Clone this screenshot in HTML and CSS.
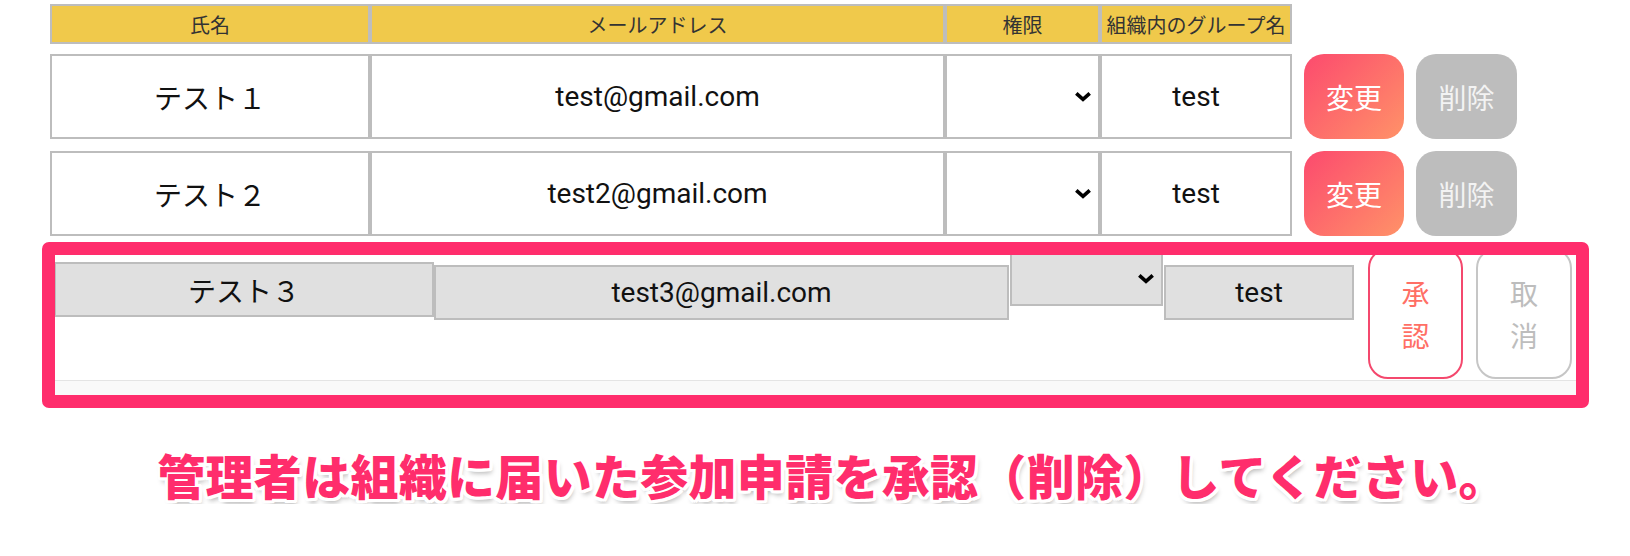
FILE: index.html
```html
<!DOCTYPE html>
<html lang="ja">
<head>
<meta charset="utf-8">
<title>メンバー管理</title>
<link rel="stylesheet" href="styles.css">
</head>
<body>
<div class="page">
  <div class="list">
    <div class="row head">
      <div class="cell c-name">氏名</div>
      <div class="cell c-mail">メールアドレス</div>
      <div class="cell c-role">権限</div>
      <div class="cell c-group">組織内のグループ名</div>
    </div>
    <div class="row member">
      <div class="cell c-name">テスト１</div>
      <div class="cell c-mail">test@gmail.com</div>
      <div class="cell c-role select"><svg class="chev" width="18" height="11" viewBox="0 0 18 11"><path d="M2.3 2.3 L9 8.4 L15.7 2.3" fill="none" stroke="#000" stroke-width="3.6"/></svg></div>
      <div class="cell c-group">test</div>
      <div class="actions">
        <button class="btn btn-change">変更</button>
        <button class="btn btn-delete">削除</button>
      </div>
    </div>
    <div class="row member">
      <div class="cell c-name">テスト２</div>
      <div class="cell c-mail">test2@gmail.com</div>
      <div class="cell c-role select"><svg class="chev" width="18" height="11" viewBox="0 0 18 11"><path d="M2.3 2.3 L9 8.4 L15.7 2.3" fill="none" stroke="#000" stroke-width="3.6"/></svg></div>
      <div class="cell c-group">test</div>
      <div class="actions">
        <button class="btn btn-change">変更</button>
        <button class="btn btn-delete">削除</button>
      </div>
    </div>
  </div>

  <div class="pending-frame">
    <div class="pending-row">
      <div class="p-cell p-name">テスト３</div>
      <div class="p-cell p-mail">test3@gmail.com</div>
      <div class="p-cell p-role"><svg class="chev" width="18" height="11" viewBox="0 0 18 11"><path d="M2.3 2.3 L9 8.4 L15.7 2.3" fill="none" stroke="#000" stroke-width="3.6"/></svg></div>
      <div class="p-cell p-group">test</div>
      <button class="p-btn p-approve">承認</button>
      <button class="p-btn p-cancel">取消</button>
    </div>
    <div class="strip"></div>
  </div>

  <p class="caption">管理者は組織に届いた参加申請を承認（削除）してください。</p>
</div>
</body>
</html>
```

FILE: styles.css
```css
html, body {
  margin: 0;
  padding: 0;
  background: #ffffff;
}

body {
  font-family: Roboto, "Noto Sans CJK JP", sans-serif;
  color: #111111;
}

.page {
  width: 1630px;
}

.list {
  padding: 4px 0 0 50px;
}

.row {
  display: flex;
}

.head {
  height: 40px;
}

.member {
  height: 85px;
  margin-top: 10px;
}

.member + .member {
  margin-top: 12px;
}

.cell {
  box-sizing: border-box;
  border: 2px solid #bdbdbd;
  display: flex;
  align-items: center;
  justify-content: center;
  background: #ffffff;
}

.head .cell {
  background: #f0c94b;
  font-family: "Noto Sans CJK JP", sans-serif;
  font-size: 20px;
  color: #333333;
  white-space: nowrap;
}

.member .cell {
  font-size: 28px;
  color: #111111;
}

.c-name { width: 320px; }
.c-mail { width: 575px; }
.c-role { width: 155px; }
.c-group { width: 192px; }

.select {
  justify-content: flex-end;
  padding-right: 6px;
}

.chev {
  display: block;
}

.actions {
  display: flex;
  gap: 12px;
  margin-left: 12px;
}

.btn {
  border: none;
  padding: 0;
  width: 100px;
  height: 85px;
  border-radius: 20px;
  font-family: "Noto Sans CJK JP", sans-serif;
  font-size: 28px;
  color: #ffffff;
}

.btn-change {
  background: linear-gradient(135deg, #fc4a6e 0%, #ff9268 100%);
}

.btn-delete {
  width: 101px;
  background: #bdbdbd;
  color: #f3f3f3;
}

/* pending request, framed */
.pending-frame {
  box-sizing: border-box;
  width: 1547px;
  height: 166px;
  margin: 6px 0 0 42px;
  border: 13px solid #ff2d6c;
  border-radius: 7px;
  overflow: hidden;
  display: flex;
  flex-direction: column;
  background: #ffffff;
}

.pending-row {
  flex: none;
  height: 125px;
  display: flex;
  align-items: flex-start;
}

.p-cell {
  box-sizing: border-box;
  border: 2px solid #bdbdbd;
  background: #e0e0e0;
  display: flex;
  align-items: center;
  justify-content: center;
  font-size: 28px;
  color: #111111;
}

.p-name {
  width: 380px;
  height: 55px;
  margin: 7px 0 0 -1px;
}

.p-mail {
  width: 575px;
  height: 55px;
  margin-top: 10px;
}

.p-role {
  width: 153px;
  height: 56px;
  margin: -5px 0 0 1px;
  justify-content: flex-end;
  padding-right: 6px;
}

.p-group {
  width: 190px;
  height: 55px;
  margin: 10px 0 0 1px;
}

.p-btn {
  box-sizing: border-box;
  width: 95px;
  height: 131px;
  margin: -7px 0 0 14px;
  padding: 0 24px;
  border-radius: 20px;
  background: #ffffff;
  font-family: "Noto Sans CJK JP", sans-serif;
  font-size: 28px;
  line-height: 42px;
}

.p-approve {
  border: 2px solid #f4486d;
  color: #ff6f65;
}

.p-cancel {
  width: 96px;
  margin-left: 13px;
  border: 2px solid #c6c6c6;
  color: #bdbdbd;
}

.strip {
  flex: 1;
  border-top: 1px solid #e4e4e4;
  background: #f9f9f9;
}

.caption {
  margin: 36px 0 0;
  padding-left: 34px;
  text-align: center;
  font-family: "Noto Sans CJK JP", sans-serif;
  font-weight: 900;
  font-size: 48px;
  line-height: 60px;
  color: #ff2d6c;
  letter-spacing: 0.3px;
  text-shadow:
    3px 0 0 #fff, -3px 0 0 #fff, 0 3px 0 #fff, 0 -3px 0 #fff,
    2px 2px 0 #fff, -2px 2px 0 #fff, 2px -2px 0 #fff, -2px -2px 0 #fff,
    3px 2px 0 #fff, -3px 2px 0 #fff, 2px 3px 0 #fff, -2px 3px 0 #fff,
    3px -2px 0 #fff, -3px -2px 0 #fff, 2px -3px 0 #fff, -2px -3px 0 #fff,
    2px 5px 5px rgba(0, 0, 0, 0.28);
}
```
